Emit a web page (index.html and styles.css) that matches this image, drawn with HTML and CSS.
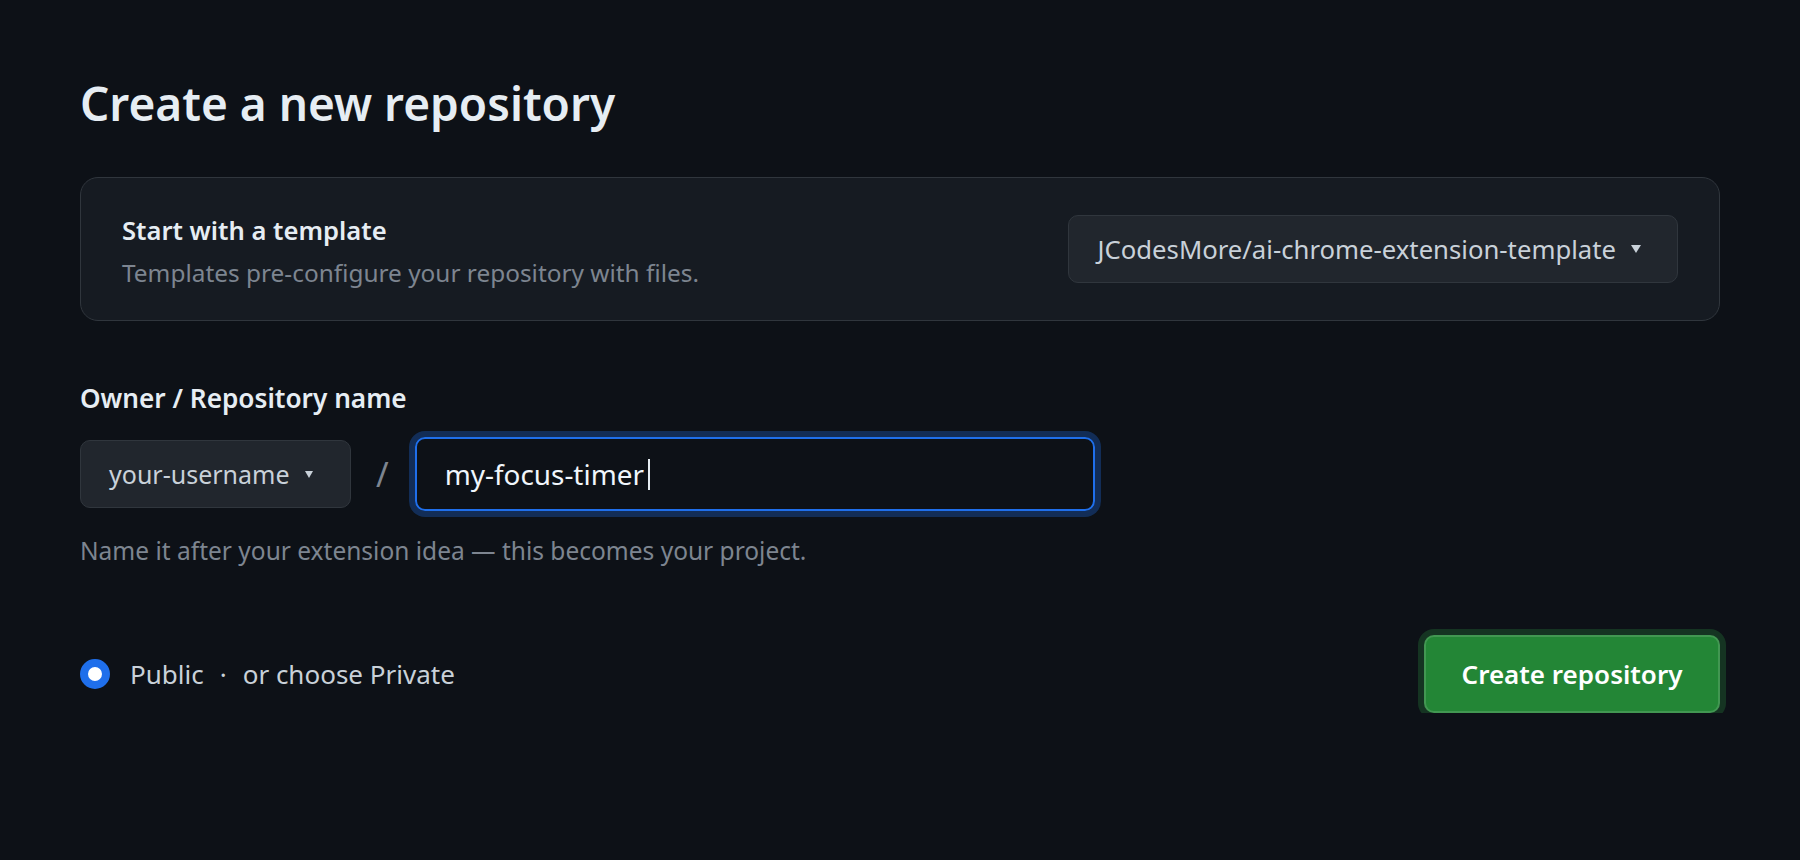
FILE: index.html
```html
<!DOCTYPE html>
<html lang="en">
<head>
    <meta charset="UTF-8">
    <meta name="viewport" content="width=device-width, initial-scale=1.0">
    <title>Create a new repository</title>
    <link rel="stylesheet" href="styles.css">
</head>
<body>
    <main class="page">
        <h1 class="page-title">Create a new repository</h1>

        <section class="template-card">
            <div class="template-info">
                <h2>Start with a template</h2>
                <p>Templates pre-configure your repository with files.</p>
            </div>
            <button class="select-btn template-select">
                <span>JCodesMore/ai-chrome-extension-template</span>
                <span class="caret"></span>
            </button>
        </section>

        <div class="field">
            <label class="field-label">Owner / Repository name</label>
            <div class="name-row">
                <button class="select-btn owner-select">
                    <span>your-username</span>
                    <span class="caret caret-sm"></span>
                </button>
                <span class="slash">/</span>
                <div class="name-input">
                    <span>my-focus-timer</span>
                    <span class="cursor"></span>
                </div>
            </div>
            <p class="hint">Name it after your extension idea — this becomes your project.</p>
        </div>

        <div class="footer-row">
            <div class="visibility">
                <span class="radio"></span>
                <span>Public</span>
                <span class="sep">·</span>
                <span>or choose Private</span>
            </div>
            <button class="create-btn">Create repository</button>
        </div>
    </main>
</body>
</html>
```

FILE: styles.css
```css
* {
    box-sizing: border-box;
}
body {
    margin: 0;
    background-color: #0d1117;
    color: #e6edf3;
    font-family: "Noto Sans", "Open Sans", sans-serif;
}
.page {
    padding: 73px 80px 0;
}
.page-title {
    margin: 0 0 44px;
    font-size: 46px;
    line-height: 60px;
    font-weight: 600;
}

/* template picker card */
.template-card {
    display: flex;
    align-items: center;
    justify-content: space-between;
    height: 144px;
    padding: 0 41px;
    background-color: #161b22;
    border: 1px solid #30363d;
    border-radius: 18px;
}
.template-info {
    padding-top: 5px;
}
.template-info h2 {
    margin: 0;
    font-size: 25.6px;
    line-height: 34px;
    font-weight: 600;
}
.template-info p {
    margin: 9px 0 0;
    font-size: 24.4px;
    line-height: 32px;
    color: #7d8590;
}

/* dropdown buttons */
.select-btn {
    display: flex;
    flex-shrink: 0;
    align-items: center;
    height: 68px;
    background-color: #21262d;
    border: 1px solid #30363d;
    border-radius: 10px;
    color: #c9d1d9;
    font-family: inherit;
    white-space: nowrap;
    cursor: pointer;
}
.template-select {
    padding: 0 36px 0 29px;
    font-size: 25.7px;
    gap: 15px;
}
.owner-select {
    width: 271px;
    padding: 0 37px 0 28px;
    font-size: 25px;
    gap: 15px;
}
.caret {
    width: 0;
    height: 0;
    border-left: 5px solid transparent;
    border-right: 5px solid transparent;
    border-top: 8px solid #c9d1d9;
}
.caret-sm {
    border-left-width: 4px;
    border-right-width: 4px;
    border-top-width: 7px;
}

/* owner / name row */
.field {
    margin-top: 59px;
}
.field-label {
    display: block;
    margin-bottom: 21px;
    font-size: 26.2px;
    line-height: 36px;
    font-weight: 600;
}
.name-row {
    display: flex;
    align-items: center;
}
.slash {
    margin: 0 26px 0 25px;
    font-size: 34px;
    color: #7d8590;
}
.name-input {
    display: flex;
    align-items: center;
    width: 680px;
    height: 74px;
    padding: 0 28px;
    border: 2px solid #1f6feb;
    border-radius: 10px;
    box-shadow: 0 0 0 6px rgba(31, 111, 235, 0.3);
    font-size: 27.9px;
    color: #f0f6fc;
}
.cursor {
    width: 2px;
    height: 31px;
    margin-left: 4px;
    background-color: #e6edf3;
}
.hint {
    margin: 24px 0 0;
    font-size: 24.5px;
    line-height: 32px;
    color: #7d8590;
}

/* visibility + submit */
.footer-row {
    display: flex;
    align-items: center;
    justify-content: space-between;
    margin-top: 68px;
}
.visibility {
    display: flex;
    align-items: center;
    font-size: 26px;
    color: #c9d1d9;
}
.radio {
    width: 30px;
    height: 30px;
    margin-right: 20px;
    border-radius: 50%;
    background-color: #ffffff;
    border: 8px solid #1f6feb;
}
.sep {
    margin: 0 16px;
}
.create-btn {
    width: 296px;
    height: 78px;
    padding: 0;
    background-color: #238636;
    border: 2px solid rgba(255, 255, 255, 0.14);
    border-radius: 10px;
    box-shadow: 0 0 0 6px rgba(46, 160, 67, 0.25);
    color: #ffffff;
    font-family: inherit;
    font-size: 26px;
    font-weight: 600;
    text-align: center;
    cursor: pointer;
}
```
